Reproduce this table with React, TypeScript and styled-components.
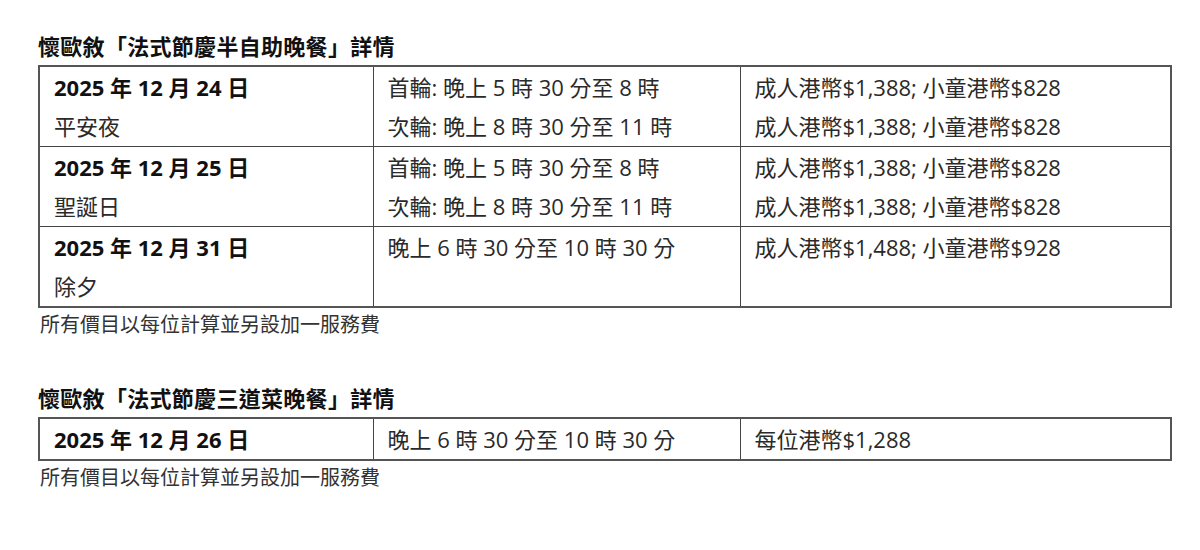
import React from "react";
import styled, { createGlobalStyle } from "styled-components";

const Global = createGlobalStyle`
  html, body { margin: 0; padding: 0; background: #ffffff; }
  body {
    font-family: "Open Sans", "Noto Sans CJK TC", "Noto Sans CJK SC", sans-serif;
    color: #111;
  }
`;

const Page = styled.div`
  width: 1200px;
  height: 550px;
  box-sizing: border-box;
  padding: 31px 0 0 38px;
`;

const Section = styled.section<{ $gap?: number }>`
  width: 1132px;
  margin-top: ${(p) => p.$gap ?? 0}px;
`;

const Title = styled.h2`
  margin: 0 0 4px 0;
  font-size: 22px;
  line-height: 30px;
  font-weight: 700;
  letter-spacing: 0.3px;
  color: #111;
  font-family: "Open Sans", "Noto Sans CJK TC", sans-serif;
`;

const Table = styled.table`
  width: 1132px;
  border-collapse: collapse;
  table-layout: fixed;
  border: 2px solid #555;
`;

const Col = styled.col<{ $w: number }>`
  width: ${(p) => p.$w}px;
`;

const Cell = styled.td`
  box-sizing: border-box;
  border: 1px solid #444;
  padding: 1px 14px 0 14px;
  vertical-align: top;
  font-size: 22px;
  line-height: 39px;
  color: #1a1a1a;
  overflow: hidden;
`;

const Line = styled.div<{ $bold?: boolean }>`
  font-weight: ${(p) => (p.$bold ? 700 : 400)};
  white-space: nowrap;
  color: ${(p) => (p.$bold ? "#111" : "#2a2a2a")};
`;

const Note = styled.p`
  margin: 2px 0 0 2px;
  font-size: 20px;
  line-height: 30px;
  color: #333;
`;

type Row = { date: string; label?: string; times: string[]; prices: string[] };

const rows1: Row[] = [
  {
    date: "2025 年 12 月 24 日",
    label: "平安夜",
    times: ["首輪: 晚上 5 時 30 分至 8 時", "次輪: 晚上 8 時 30 分至 11 時"],
    prices: ["成人港幣$1,388; 小童港幣$828", "成人港幣$1,388; 小童港幣$828"],
  },
  {
    date: "2025 年 12 月 25 日",
    label: "聖誕日",
    times: ["首輪: 晚上 5 時 30 分至 8 時", "次輪: 晚上 8 時 30 分至 11 時"],
    prices: ["成人港幣$1,388; 小童港幣$828", "成人港幣$1,388; 小童港幣$828"],
  },
  {
    date: "2025 年 12 月 31 日",
    label: "除夕",
    times: ["晚上 6 時 30 分至 10 時 30 分"],
    prices: ["成人港幣$1,488; 小童港幣$928"],
  },
];

const rows2: Row[] = [
  {
    date: "2025 年 12 月 26 日",
    times: ["晚上 6 時 30 分至 10 時 30 分"],
    prices: ["每位港幣$1,288"],
  },
];

const widths = [334, 367, 431];

function DinnerTable({ rows }: { rows: Row[] }) {
  return (
    <Table>
      <colgroup>
        {widths.map((w, i) => (
          <Col key={i} $w={w} />
        ))}
      </colgroup>
      <tbody>
        {rows.map((r) => (
          <tr key={r.date}>
            <Cell>
              <Line $bold>{r.date}</Line>
              {r.label && <Line>{r.label}</Line>}
            </Cell>
            <Cell>
              {r.times.map((t, i) => (
                <Line key={i}>{t}</Line>
              ))}
            </Cell>
            <Cell>
              {r.prices.map((t, i) => (
                <Line key={i}>{t}</Line>
              ))}
            </Cell>
          </tr>
        ))}
      </tbody>
    </Table>
  );
}

export default function App() {
  return (
    <>
      <Global />
      <Page>
        <Section>
          <Title>懷歐敘「法式節慶半自助晚餐」詳情</Title>
          <DinnerTable rows={rows1} />
          <Note>所有價目以每位計算並另設加一服務費</Note>
        </Section>
        <Section $gap={43}>
          <Title>懷歐敘「法式節慶三道菜晚餐」詳情</Title>
          <DinnerTable rows={rows2} />
          <Note>所有價目以每位計算並另設加一服務費</Note>
        </Section>
      </Page>
    </>
  );
}
